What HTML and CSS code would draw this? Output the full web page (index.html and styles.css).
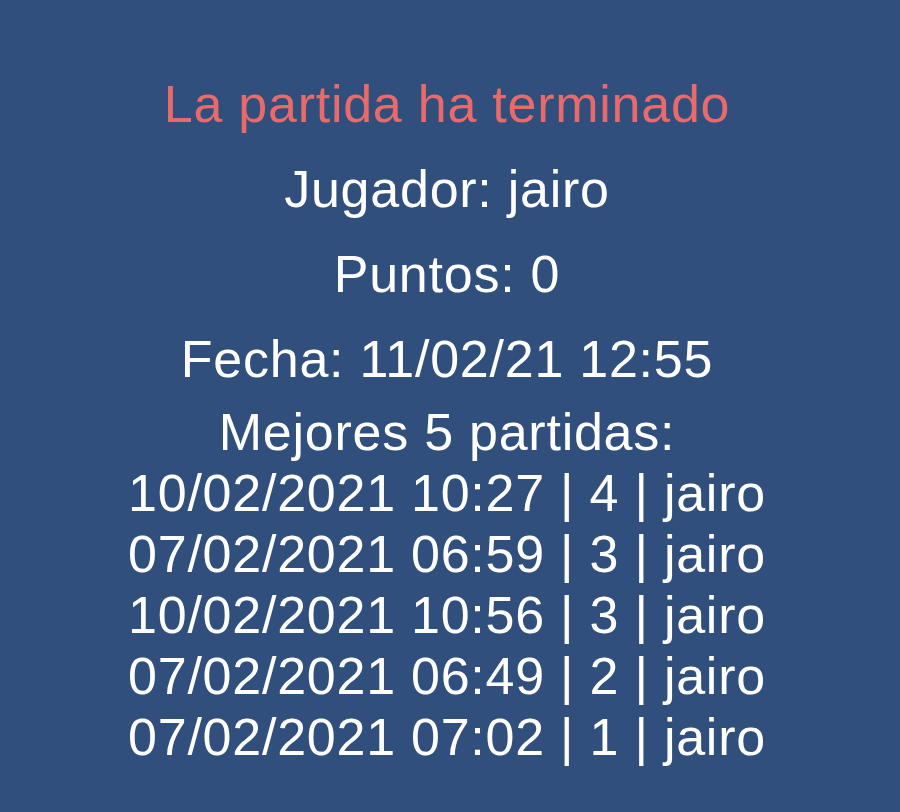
FILE: index.html
```html
<!DOCTYPE html>
<html lang="es">
<head>
  <meta charset="UTF-8">
  <title>Fin de partida</title>
  <meta name="viewport" content="width=device-width, initial-scale=1">
  <link rel="stylesheet" href="styles.css">
</head>
<body>

  <div class="resumen">
    <h1 class="titulo">La partida ha terminado</h1>
    <p class="dato">Jugador: jairo</p>
    <p class="dato">Puntos: 0</p>
    <p class="dato fecha">Fecha: 11/02/21 12:55</p>

    <div class="ranking">
      <p>Mejores 5 partidas:</p>
      <ul>
        <li>10/02/2021 10:27 | 4 | jairo</li>
        <li>07/02/2021 06:59 | 3 | jairo</li>
        <li>10/02/2021 10:56 | 3 | jairo</li>
        <li>07/02/2021 06:49 | 2 | jairo</li>
        <li>07/02/2021 07:02 | 1 | jairo</li>
      </ul>
    </div>
  </div>

</body>
</html>
```

FILE: styles.css
```css
* {
  box-sizing: border-box;
}
html, body {
  height: 100%;
}
body {
  margin: 0;
  background-color: #314f7c;
  color: #fff;
  font-family: 'Liberation Sans', Arial, sans-serif;
}
.resumen {
  display: flex;
  flex-direction: column;
  align-items: center;
  padding: 74px 6px 0 0;
  font-size: 52px;
  line-height: 61px;
  letter-spacing: 0.75px;
  text-align: center;
}
.resumen p, .resumen h1 {
  margin: 0;
}
.titulo {
  font-size: 52px;
  font-weight: normal;
  color: #e96a6a;
  margin-bottom: 24px !important;
}
.dato {
  margin-bottom: 24px !important;
}
.dato.fecha {
  margin-bottom: 12px !important;
}
.ranking ul {
  list-style: none;
  margin: 0;
  padding: 0;
}
```
